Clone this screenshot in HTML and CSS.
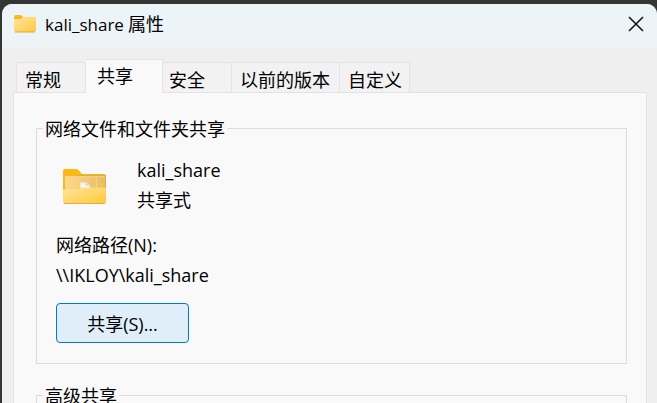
FILE: index.html
```html
<!DOCTYPE html>
<html lang="zh-CN">
<head>
<meta charset="utf-8">
<meta name="viewport" content="width=device-width, initial-scale=1">
<title>kali_share 属性</title>
<link rel="stylesheet" href="styles.css">
</head>
<body>
<main class="window">
  <header class="titlebar">
    <svg class="title-icon" viewBox="0 0 22 18" aria-hidden="true">
      <defs>
        <linearGradient id="small-front" x1="0" y1="0" x2="1" y2="1">
          <stop offset="0" stop-color="#ffe7a0"/>
          <stop offset="1" stop-color="#ffc83d"/>
        </linearGradient>
      </defs>
      <path d="M0 2Q0 0 2 0H6Q7 0 8 1L9 2H20Q22 2 22 4V8H0Z" fill="#f9b81c"/>
      <path d="M0 4H7L9 2H20Q22 2 22 4V15Q22 17 20 17H2Q0 17 0 15Z" fill="url(#small-front)"/>
      <path d="M1 17H21" stroke="#e0a63c" stroke-width="1"/>
    </svg>
    <h1 class="title"><span class="latin-small">kali_share</span> 属性</h1>
    <button class="close" type="button" aria-label="关闭">
      <svg viewBox="0 0 16 16" aria-hidden="true"><path d="M1 1L15 15M15 1L1 15" fill="none" stroke="#111" stroke-width="1.5"/></svg>
    </button>
  </header>

  <div class="content">
    <div class="tabs" role="tablist">
      <button class="tab tab-general" type="button" role="tab" aria-selected="false">常规</button>
      <button class="tab tab-active" type="button" role="tab" aria-selected="true">共享</button>
      <button class="tab tab-security" type="button" role="tab" aria-selected="false">安全</button>
      <button class="tab tab-versions" type="button" role="tab" aria-selected="false">以前的版本</button>
      <button class="tab tab-custom" type="button" role="tab" aria-selected="false">自定义</button>
    </div>

    <section class="panel" role="tabpanel">
      <fieldset class="group">
        <legend>网络文件和文件夹共享</legend>
        <div class="share">
          <svg class="folder" viewBox="0 0 42 34" aria-hidden="true">
            <defs>
              <linearGradient id="front" x1="0" y1="0" x2="1" y2="1">
                <stop offset="0" stop-color="#ffe69d"/>
                <stop offset="1" stop-color="#ffc936"/>
              </linearGradient>
              <linearGradient id="back" x1="0" y1="0" x2="1" y2="0">
                <stop offset="0" stop-color="#fbd98a"/>
                <stop offset="1" stop-color="#e9bd63"/>
              </linearGradient>
            </defs>
            <path d="M0 2Q0 0 2 0H13Q14 0 15 1L19 5H40Q42 5 42 7V24H0Z" fill="#fbb917"/>
            <path d="M19 5H40Q42 5 42 7V24H12V7Z" fill="#eaae2b"/>
            <rect x="2" y="7" width="39" height="15" fill="url(#back)"/>
            <path d="M9.500 7V20M32.500 7V18M2 7.500H41" stroke="#f6d592" stroke-width="1" fill="none"/>
            <path d="M17 13H23L26 16V20H17Z" fill="#f3f5fb"/>
            <path d="M22 13V16H26Z" fill="#cdd1da"/>
            <path d="M0 21Q0 20 1 20H15L18 18H41Q42 18 42 19V32Q42 34 40 34H2Q0 34 0 32Z" fill="url(#front)"/>
            <path d="M1 33.500H41" stroke="#e5ad45" stroke-width="1"/>
          </svg>
          <div>
            <div class="line"><span class="latin">kali_share</span></div>
            <div class="line">共享式</div>
          </div>
        </div>
        <div class="path">
          <div class="line">网络路径<span class="latin">(N):</span></div>
          <div class="line"><span class="latin">\\IKLOY\kali_share</span></div>
        </div>
        <button class="action" type="button">共享<span class="latin">(S)...</span></button>
      </fieldset>

      <fieldset class="group">
        <legend>高级共享</legend>
      </fieldset>
    </section>
  </div>
</main>
</body>
</html>
```
FILE: styles.css
```css
* {
  box-sizing: border-box;
}

body {
  margin: 0;
  height: 100vh;
  overflow: hidden;
  padding: 4px 0 0 2px;
  background: #353535;
  color: #000;
  font: 18px/24px "Noto Sans CJK SC", sans-serif;
}

button {
  font: inherit;
  color: inherit;
}

.latin,
.latin-small {
  font-family: "Open Sans", "Noto Sans CJK SC", sans-serif;
  font-size: 18px;
  line-height: 24px;
}

.latin-small {
  font-size: 17px;
}

.window {
  min-height: 100%;
  background: #efefef;
  border-radius: 10px 10px 0 0;
  overflow: hidden;
}

.titlebar {
  display: flex;
  align-items: center;
  height: 43px;
  padding: 0 12px;
  background: #ecf4f8;
}

.title-icon {
  width: 22px;
  height: 18px;
  margin-bottom: 4px;
}

.title {
  flex: 1;
  margin: 0 0 4px 9px;
  font: inherit;
}

.close {
  display: flex;
  padding: 0 1px;
  margin-bottom: 4px;
  border: 0;
  background: none;
}

.close svg {
  width: 16px;
  height: 16px;
}

.content {
  padding: 12px 10px 0 11px;
}

.tabs {
  display: flex;
  align-items: flex-end;
  padding-left: 3px;
}

.tab {
  height: 30px;
  padding: 4px 0 4px 8px;
  border: 1px solid #e3e3e3;
  border-width: 1px 1px 0 0;
  background: #f2f2f2;
  text-align: left;
}

.tab-general {
  width: 70px;
  border-left-width: 1px;
}

.tab-active {
  position: relative;
  width: 77px;
  height: 34px;
  margin-bottom: -1px;
  padding: 0 0 4px 11px;
  background: #f9f9f9;
}

.tab-security {
  width: 69px;
  padding-left: 6px;
}

.tab-versions {
  width: 108px;
}

.tab-custom {
  width: 70px;
}

.panel {
  padding: 23px 19px 0 22px;
  border: 1px solid #e3e3e3;
  background: #f9f9f9;
}

.group {
  min-width: 0;
  margin: 0 0 19px;
  padding: 14px 19px 20px;
  border: 1px solid #dcdcdc;
}

.group legend {
  margin-left: -13px;
  padding: 0 2px;
}

.line {
  line-height: 30px;
}

.share {
  display: flex;
  align-items: center;
  padding-left: 7px;
}

.folder {
  width: 43px;
  height: 35px;
  margin: 4px 31px 0 0;
}

.path {
  margin: 15px 0 14px;
}

.action {
  min-width: 133px;
  height: 40px;
  border: 1px solid #0078d4;
  border-radius: 4px;
  background: #e0eef9;
}
```
